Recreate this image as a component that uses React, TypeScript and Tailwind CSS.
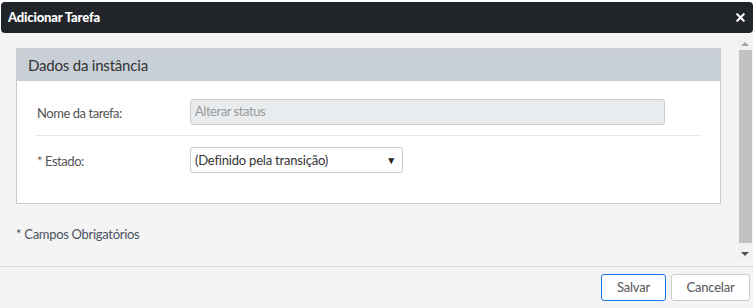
import { X } from 'lucide-react';

const font = { fontFamily: 'Lato, "Liberation Sans", sans-serif' };

function Row({ label, children, last }: { label: string; children: React.ReactNode; last?: boolean }) {
  return (
    <div className={`flex items-center mx-[20px] ${last ? '' : 'border-b border-dotted border-[#cfcfcf] pb-[10px] mb-[11px]'}`}>
      <div className="w-[153px] pt-[3px] text-[13px] tracking-[-0.45px] text-[#555]">{label}</div>
      {children}
    </div>
  );
}

export default function App() {
  return (
    <div className="w-[756px] h-[308px] bg-white overflow-hidden" style={font}>
      {/* Dialog title bar */}
      <div className="mt-[2px] ml-[1px] w-[752px] h-[31px] bg-[#212529] rounded-[4px] flex items-center justify-between pl-[7px] pr-[6px]">
        <span className="text-white text-[13px] font-black tracking-[-0.15px]">Adicionar Tarefa</span>
        <X className="w-[13px] h-[13px] text-white" strokeWidth={4} />
      </div>

      <div className="w-[753px] h-[275px] bg-[#f4f4f4] flex flex-col">
        {/* Scrollable content */}
        <div className="h-[234px] flex border-b border-dotted border-[#c4c4c4]">
          <div className="flex-1 pt-[15px] pl-[16px]">
            <div className="w-[705px] border border-[#cccccc] bg-white">
              <div className="h-[32px] bg-[#c8cfd6] flex items-center pl-[11px] pt-[1px] text-[15px] tracking-[-0.2px] text-[#333]">
                Dados da instância
              </div>
              <div className="pt-[18px] pb-[30px]">
                <Row label="Nome da tarefa:">
                  <div className="w-[475px] h-[26px] bg-[#e9ecef] border border-[#cccccc] rounded-[3px] flex items-center pl-[4px] text-[13px] tracking-[-0.45px] text-[#999]">
                    Alterar status
                  </div>
                </Row>
                <Row label="* Estado:" last>
                  <div className="w-[213px] h-[26px] bg-white border border-[#cccccc] rounded-[3px] flex items-center justify-between pl-[4px] pr-[6px] pt-[1px] text-[13px] tracking-[-0.2px] text-[#333]">
                    <span>(Definido pela transição)</span>
                    <span className="text-[10px] text-[#222]">▼</span>
                  </div>
                </Row>
              </div>
            </div>
            <div className="mt-[21px] text-[13px] tracking-[-0.3px] text-[#4a5262]">* Campos Obrigatórios</div>
          </div>

          {/* Scrollbar */}
          <div className="w-[14px] mr-[1px] mt-[4px] mb-[5px] flex flex-col items-center bg-[#f1f1f1]">
            <div className="h-[13px] flex items-center justify-center">
              <div className="w-0 h-0 border-l-[4px] border-r-[4px] border-b-[4px] border-l-transparent border-r-transparent border-b-[#a3a3a3]" />
            </div>
            <div className="w-[13px] flex-1 bg-[#c1c1c1]" />
            <div className="h-[11px] w-full flex items-center justify-center mt-[5px] mb-[2px]">
              <div className="w-0 h-0 border-l-[4px] border-r-[4px] border-t-[4px] border-l-transparent border-r-transparent border-t-[#505050]" />
            </div>
          </div>
        </div>

        {/* Footer */}
        <div className="flex justify-end gap-[5px] pt-[7px] pr-[3px]">
          <button className="w-[65px] h-[27px] border border-[#1a73e8] rounded-[3px] bg-white text-[13px] tracking-[-0.2px] text-[#555]">
            Salvar
          </button>
          <button className="w-[79px] h-[27px] border border-[#cccccc] rounded-[3px] bg-white text-[13px] tracking-[-0.2px] text-[#555]">
            Cancelar
          </button>
        </div>
      </div>
    </div>
  );
}
